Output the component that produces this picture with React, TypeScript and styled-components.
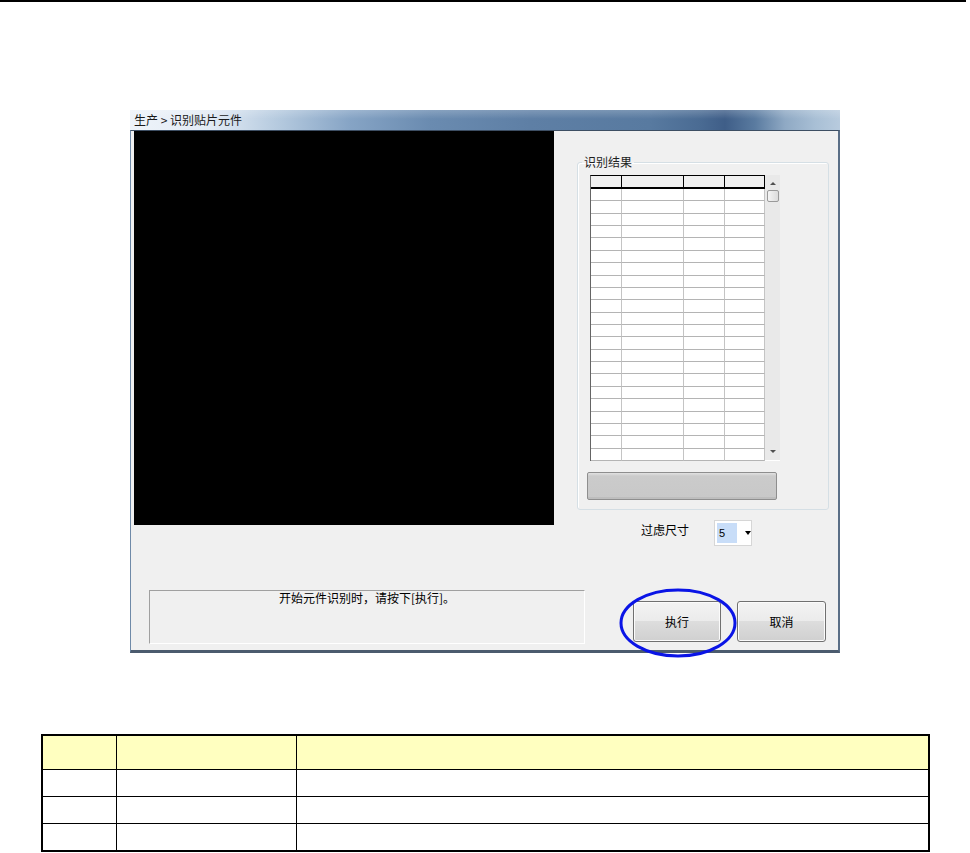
import React from "react";
import styled, { createGlobalStyle } from "styled-components";

const GlobalStyle = createGlobalStyle`
	html, body {
		margin: 0;
		padding: 0;
		background: #ffffff;
	}
	body {
		font-family: "Noto Sans CJK SC", "Liberation Sans", sans-serif;
		font-size: 12px;
		color: #000000;
	}
`;

const Page = styled.div`
	width: 970px;
	height: 853px;
	overflow: hidden;
	display: flex;
	flex-direction: column;
`;

const TopRule = styled.div`
	width: 966px;
	height: 2px;
	background: #000000;
`;

const Window = styled.div`
	margin: 108px 0 0 130px;
	width: 710px;
	display: flex;
	flex-direction: column;
`;

const TitleBar = styled.div`
	height: 20px;
	padding-left: 4px;
	display: flex;
	align-items: center;
	font-size: 12px;
	line-height: 14px;
	color: #1a1a1a;
	background:
		linear-gradient(180deg, rgba(255, 255, 255, 0.2) 0, rgba(255, 255, 255, 0) 45%),
		linear-gradient(
			90deg,
			#eef3f9 0,
			#e2ebf5 80px,
			#b4c9de 150px,
			#86a4c5 220px,
			#6a8bb0 300px,
			#5e7fa5 400px,
			#587aa0 520px,
			#4a6b93 570px,
			#3f5e88 595px,
			#5a7ba0 625px,
			#8fa9c4 655px,
			#a8bfd5 685px,
			#b8cbde 710px
		);
`;

const Client = styled.div`
	height: 523px;
	box-sizing: border-box;
	background: #f0f0f0;
	border-top: 1px solid #3d4e63;
	border-left: 1px solid #6f8aa8;
	border-right: 2px solid #5a6e86;
	border-bottom: 3px solid #4b5b6e;
	padding-left: 3px;
	display: flex;
	flex-direction: column;
`;

const MainRow = styled.div`
	display: flex;
	align-items: flex-start;
`;

const Video = styled.div`
	width: 420px;
	height: 394px;
	background: #000000;
`;

const SidePanel = styled.div`
	margin: 24px 0 0 23px;
	display: flex;
	flex-direction: column;
`;

const GroupBox = styled.fieldset`
	margin: 0;
	padding: 6px 0 0 0;
	width: 252px;
	height: 355px;
	box-sizing: border-box;
	min-width: 0;
	border: 1px solid #d5dfe5;
	border-radius: 3px;
	box-shadow: inset 1px 1px 0 #ffffff;
`;

const Legend = styled.legend`
	margin-left: 4px;
	padding: 0 2px;
	font-size: 12px;
	line-height: 14px;
	color: #1e1e1e;
`;

const GridWrap = styled.div`
	margin-left: 12px;
	display: flex;
	width: 191px;
	height: 286px;
`;

const Grid = styled.div`
	width: 175px;
	height: 286px;
	box-sizing: border-box;
	background: #ffffff;
	border-left: 1px solid #646464;
	border-top: 1px solid #000000;
	display: grid;
	grid-template-columns: 31px 62px 41px 40px;
	grid-template-rows: 13px repeat(22, 1fr);
`;

const Cell = styled.div<{ $head?: boolean }>`
	box-sizing: border-box;
	border-right: 1px solid ${(p) => (p.$head ? "#000000" : "#c4c4c4")};
	border-bottom: ${(p) => (p.$head ? "2px solid #000000" : "1px solid #b4b4b4")};
	background: ${(p) => (p.$head ? "#f0f0f0" : "#ffffff")};
`;

const ScrollBar = styled.div`
	width: 15px;
	height: 286px;
	box-sizing: border-box;
	background: #e9e9e9;
	border-bottom: 1px solid #ffffff;
	display: flex;
	flex-direction: column;
	align-items: center;
`;

const ScrollArrow = styled.div<{ $down?: boolean }>`
	width: 0;
	height: 0;
	margin: ${(p) => (p.$down ? "auto 0 7px" : "7px 0 0")};
	border-left: 3px solid transparent;
	border-right: 3px solid transparent;
	${(p) =>
		p.$down ? "border-top: 3px solid #505050;" : "border-bottom: 3px solid #505050;"}
`;

const Thumb = styled.div`
	margin-top: 5px;
	width: 12px;
	height: 12px;
	box-sizing: border-box;
	border: 1px solid #9a9a9a;
	border-radius: 2px;
	background: linear-gradient(90deg, #f4f4f4, #dcdcdc);
`;

const WideButton = styled.div`
	margin: 11px 0 0 9px;
	width: 190px;
	height: 28px;
	box-sizing: border-box;
	border: 1px solid #8e8e8e;
	border-radius: 2px;
	background: linear-gradient(180deg, #e2e2e2 0, #cbcbcb 3px, #c8c8c8 100%);
	box-shadow: inset 0 -2px 0 #bdbdbd;
`;

const FilterRow = styled.div`
	margin-top: 10px;
	padding-left: 64px;
	height: 26px;
	display: flex;
	align-items: center;
`;

const FilterLabel = styled.span`
	width: 73px;
	font-size: 12px;
	line-height: 14px;
	margin-top: -6px;
`;

const Combo = styled.div`
	width: 38px;
	height: 26px;
	box-sizing: border-box;
	background: #ffffff;
	border: 1px solid #d6d6d6;
	display: flex;
	align-items: center;
	padding-left: 2px;
`;

const ComboValue = styled.span`
	width: 20px;
	height: 20px;
	background: #c8ddf8;
	font-family: "Liberation Sans", sans-serif;
	font-size: 11px;
	line-height: 20px;
	padding-left: 2px;
	box-sizing: border-box;
`;

const ComboArrow = styled.span`
	margin-left: 8px;
	width: 0;
	height: 0;
	border-left: 3px solid transparent;
	border-right: 3px solid transparent;
	border-top: 4px solid #000000;
`;

const BottomRow = styled.div`
	margin-top: 44px;
	display: flex;
	align-items: flex-start;
`;

const StatusBox = styled.div`
	margin-left: 15px;
	width: 436px;
	height: 54px;
	box-sizing: border-box;
	border-top: 1px solid #a0a0a0;
	border-left: 1px solid #a0a0a0;
	border-right: 1px solid #ffffff;
	border-bottom: 1px solid #ffffff;
	text-align: center;
	font-size: 12px;
	line-height: 14px;
`;

const ButtonGroup = styled.div`
	margin: 11px 0 0 48px;
	display: flex;
	gap: 16px;
`;

const ActionButton = styled.div<{ $width: number }>`
	position: relative;
	width: ${(p) => p.$width}px;
	height: 41px;
	box-sizing: border-box;
	border: 1px solid #707070;
	border-radius: 3px;
	background: linear-gradient(
		180deg,
		#f3f3f3 0,
		#ebebeb 48%,
		#dddddd 50%,
		#d0d0d0 100%
	);
	box-shadow: inset 0 0 0 1px #fbfbfb;
	display: flex;
	align-items: center;
	justify-content: center;
	font-size: 12px;
	line-height: 14px;
`;

const Ring = styled.svg`
	position: absolute;
	left: -15px;
	top: -14px;
	width: 118px;
	height: 70px;
	overflow: visible;
	pointer-events: none;
`;

const DocTable = styled.table`
	margin: 81px 0 0 41px;
	width: 889px;
	border-collapse: collapse;
	border: 2px solid #000000;
	table-layout: fixed;
`;

const HeadCell = styled.th<{ $width?: number }>`
	${(p) => (p.$width ? `width: ${p.$width}px;` : "")}
	height: 33px;
	padding: 0;
	background: #ffffc0;
	border: 1.5px solid #000000;
	border-top: 2px solid #000000;
`;

const BodyCell = styled.td`
	height: 26px;
	padding: 0;
	border: 1.5px solid #000000;
`;

const rows = Array.from({ length: 22 });

export default function App() {
	return (
		<Page>
			<GlobalStyle />
			<TopRule />
			<Window>
				<TitleBar>生产 &gt; 识别贴片元件</TitleBar>
				<Client>
					<MainRow>
						<Video />
						<SidePanel>
							<GroupBox>
								<Legend>识别结果</Legend>
								<GridWrap>
									<Grid>
										{[0, 1, 2, 3].map((c) => (
											<Cell key={`h${c}`} $head />
										))}
										{rows.map((_, r) =>
											[0, 1, 2, 3].map((c) => <Cell key={`${r}-${c}`} />)
										)}
									</Grid>
									<ScrollBar>
										<ScrollArrow />
										<Thumb />
										<ScrollArrow $down />
									</ScrollBar>
								</GridWrap>
								<WideButton />
							</GroupBox>
							<FilterRow>
								<FilterLabel>过虑尺寸</FilterLabel>
								<Combo>
									<ComboValue>5</ComboValue>
									<ComboArrow />
								</Combo>
							</FilterRow>
						</SidePanel>
					</MainRow>
					<BottomRow>
						<StatusBox>开始元件识别时，请按下[执行]。</StatusBox>
						<ButtonGroup>
							<ActionButton $width={88}>
								执行
								<Ring viewBox="0 0 118 70">
									<ellipse
										cx="59"
										cy="35"
										rx="57"
										ry="33"
										fill="none"
										stroke="#0a14e6"
										strokeWidth="3"
									/>
								</Ring>
							</ActionButton>
							<ActionButton $width={89}>取消</ActionButton>
						</ButtonGroup>
					</BottomRow>
				</Client>
			</Window>
			<DocTable>
				<thead>
					<tr>
						<HeadCell $width={73} />
						<HeadCell $width={179} />
						<HeadCell />
					</tr>
				</thead>
				<tbody>
					{[0, 1, 2].map((r) => (
						<tr key={r}>
							<BodyCell />
							<BodyCell />
							<BodyCell />
						</tr>
					))}
				</tbody>
			</DocTable>
		</Page>
	);
}
